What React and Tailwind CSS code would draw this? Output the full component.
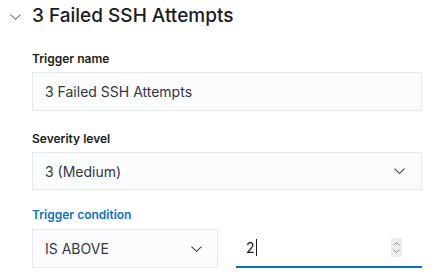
import React from "react";

function Chevron({ className }) {
  return (
    <svg viewBox="0 0 12 6" className={className} fill="none" stroke="currentColor" strokeWidth="1.1">
      <path d="M0.5 0.5 L6 5.5 L11.5 0.5" />
    </svg>
  );
}

export default function App() {
  return (
    <div className="h-[277px] w-[434px] overflow-hidden bg-white font-['Inter',sans-serif] text-[#1a1c21]">
      <div className="flex h-[28px] items-center pt-[4px]">
        <Chevron className="ml-[10px] mt-[1px] h-[6px] w-[11px] text-[#69707d]" />
        <h2 className="ml-[11px] text-[19px] font-medium leading-[24px]">3 Failed SSH Attempts</h2>
      </div>

      <div className="mt-[23px] pl-[32px] pr-[12px]">
        <label className="block text-[12px] font-semibold leading-[16px]">Trigger name</label>
        <div className="mt-[5px] flex h-[39px] items-center border border-[#e6e9ee] bg-[#fbfcfd] px-3 text-[14px] text-[#343741]">
          3 Failed SSH Attempts
        </div>

        <label className="mt-[20px] block text-[12px] font-semibold leading-[16px]">Severity level</label>
        <div className="mt-[5px] flex h-[38px] items-center justify-between border border-[#e6e9ee] bg-[#fbfcfd] pl-3 pr-[16px] text-[14px] text-[#343741]">
          <span>3 (Medium)</span>
          <Chevron className="h-[6px] w-[11px] text-[#343741]" />
        </div>

        <label className="mt-[17px] block text-[12px] font-semibold leading-[16px] text-[#0b72c6]">Trigger condition</label>
        <div className="mt-[6px] flex h-[39px] gap-[18px]">
          <div className="flex w-[186px] items-center justify-between border border-[#e6e9ee] bg-[#fbfcfd] pl-3 pr-[15px] text-[14px] text-[#343741]">
            <span>IS ABOVE</span>
            <Chevron className="h-[6px] w-[11px] text-[#343741]" />
          </div>
          <div className="flex flex-1 items-center justify-between border-b-2 border-[#0a6fc2] bg-white pl-[10px] pr-[20px] text-[14px] text-[#1a1c21]">
            <span className="flex items-center">
              2<span className="ml-[1px] inline-block h-[17px] w-[1px] bg-[#1a1c21]" />
            </span>
            <div className="flex h-[19px] w-[11px] flex-col items-center justify-center gap-[3px] bg-[#eceef1]">
              <svg viewBox="0 0 8 4" className="h-[4px] w-[7px] text-[#7d828c]" fill="none" stroke="currentColor" strokeWidth="1">
                <path d="M0.5 3.5 L4 0.5 L7.5 3.5" />
              </svg>
              <svg viewBox="0 0 8 4" className="h-[4px] w-[7px] text-[#7d828c]" fill="none" stroke="currentColor" strokeWidth="1">
                <path d="M0.5 0.5 L4 3.5 L7.5 0.5" />
              </svg>
            </div>
          </div>
        </div>
      </div>
    </div>
  );
}
